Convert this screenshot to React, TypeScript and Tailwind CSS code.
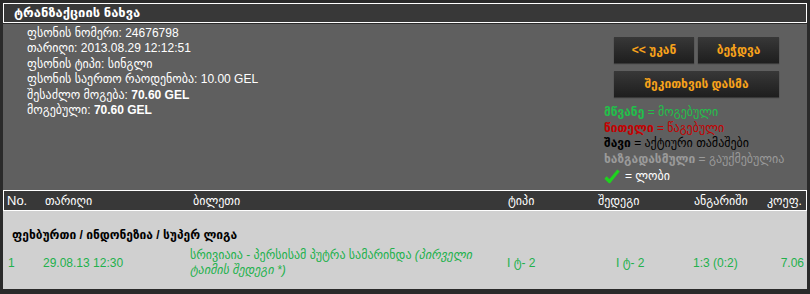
const font = { fontFamily: '"Liberation Sans", "DejaVu Sans", sans-serif' };

function Info() {
  return (
    <div className="flex-1 pl-[24px] pt-[2px] text-[12px] leading-[15.4px] text-white">
      <div>ფსონის ნომერი: 24676798</div>
      <div>თარიღი: 2013.08.29 12:12:51</div>
      <div>ფსონის ტიპი: სინგლი</div>
      <div>ფსონის საერთო რაოდენობა: 10.00 GEL</div>
      <div>
        შესაძლო მოგება: <b>70.60 GEL</b>
      </div>
      <div>
        მოგებული: <b>70.60 GEL</b>
      </div>
    </div>
  );
}

function Btn({ children, className = "" }: { children: React.ReactNode; className?: string }) {
  return (
    <button
      type="button"
      className={
        "flex h-[26px] items-center justify-center bg-gradient-to-b from-[#383838] to-[#1e1e1e] text-[12px] font-bold text-[#f7a21b] shadow-[0_1px_1px_rgba(0,0,0,0.4)] " +
        className
      }
    >
      {children}
    </button>
  );
}

function Legend() {
  return (
    <div className="mt-[8px] whitespace-nowrap text-[12px] leading-[15.7px]">
      <div className="text-[#22c04a]">
        <b>მწვანე</b> = მოგებული
      </div>
      <div className="text-[#c40000]">
        <b>წითელი</b> = წაგებული
      </div>
      <div className="text-black">
        <b>შავი</b> = აქტიური თამაშები
      </div>
      <div className="text-[#9a9a9a]">
        <b>ხაზგადასმული</b> = გაუქმებულია
      </div>
      <div className="mt-[1px] flex items-center gap-[5px] text-white">
        <svg width="16" height="15" viewBox="0 0 16 15" aria-hidden>
          <path d="M1.5 8.5 L5.5 12.5 L14.5 1.5" fill="none" stroke="#1fd21f" strokeWidth="3.2" strokeLinejoin="round" />
        </svg>
        <span>= ლობი</span>
      </div>
    </div>
  );
}

export default function App() {
  return (
    <div
      className="h-[294px] w-[810px] overflow-hidden bg-[#2a2a2a] pl-[3px] pt-[3px]"
      style={font}
    >
      <div className="w-[804px]">
        <div className="flex h-[20px] items-center border border-white bg-[#383838] pl-[10px] text-[13px] font-bold text-white">
          ტრანზაქციის ნახვა
        </div>
        <div className="mt-[1px] flex h-[166px] bg-[#5f5f5f]">
          <Info />
          <div className="mr-[28px] w-[175px] pt-[13px]">
            <div className="ml-[10px] flex flex-col gap-[8px]">
              <div className="flex gap-[4px]">
                <Btn className="w-[80px]">&lt;&lt; უკან</Btn>
                <Btn className="w-[81px]">ბეჭდვა</Btn>
              </div>
              <Btn className="w-[165px]">შეკითხვის დასმა</Btn>
            </div>
            <Legend />
          </div>
        </div>
        <div className="grid h-[21px] grid-cols-[37px_150px_315px_90px_98px_73px_1fr] items-center border border-white bg-[#383838] text-[12px] text-white">
          <div className="pl-[3px] text-[13px]">No.</div>
          <div className="pl-[4px]">თარიღი</div>
          <div className="pl-[2px]">ბილეთი</div>
          <div className="pl-[2px]">ტიპი</div>
          <div className="pl-[2px]">შედეგი</div>
          <div className="pl-[0px]">ანგარიში</div>
          <div className="pl-[0px]">კოეფ.</div>
        </div>
        <div className="h-[78px] bg-[#d0d0d0] text-[12px]">
          <div className="pl-[9px] pt-[16px] font-bold leading-[16px] text-black">
            ფეხბურთი / ინდონეზია / სუპერ ლიგა
          </div>
          <div className="mt-[5px] grid grid-cols-[37px_150px_315px_111px_77px_73px_1fr] items-center leading-[15px] text-[#22b14c]">
            <div className="pl-[5px]">1</div>
            <div className="pl-[3px]">29.08.13 12:30</div>
            <div className="whitespace-nowrap">
              <div>
                სრივიაია - პერსისამ პუტრა სამარინდა <i>(პირველი</i>
              </div>
              <div>
                <i>ტაიმის შედეგი *)</i>
              </div>
            </div>
            <div className="pl-[2px]">I ტ- 2</div>
            <div>I ტ- 2</div>
            <div className="pl-[0px]">1:3 (0:2)</div>
            <div className="pr-[3px] text-right">7.06</div>
          </div>
        </div>
      </div>
    </div>
  );
}
